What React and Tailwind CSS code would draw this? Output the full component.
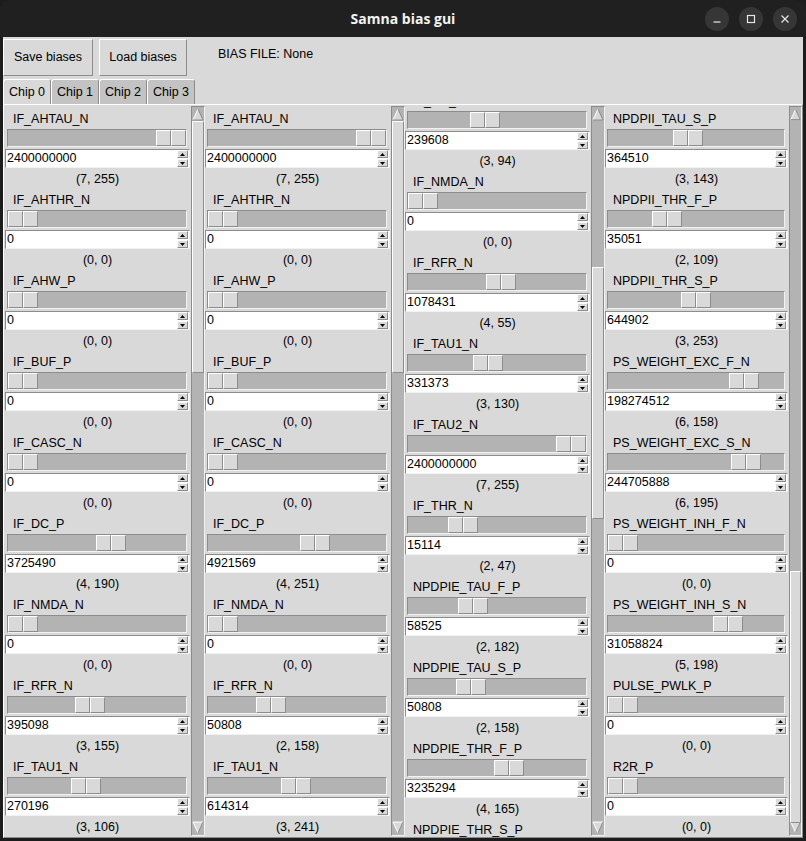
import React from 'react';

const columns = [
  {
    offset: 0,
    thumbTop: 0,
    items: [
      ['IF_AHTAU_N', '2400000000', 7, 255],
      ['IF_AHTHR_N', '0', 0, 0],
      ['IF_AHW_P', '0', 0, 0],
      ['IF_BUF_P', '0', 0, 0],
      ['IF_CASC_N', '0', 0, 0],
      ['IF_DC_P', '3725490', 4, 190],
      ['IF_NMDA_N', '0', 0, 0],
      ['IF_RFR_N', '395098', 3, 155],
      ['IF_TAU1_N', '270196', 3, 106],
    ],
  },
  {
    offset: 0,
    thumbTop: 0,
    items: [
      ['IF_AHTAU_N', '2400000000', 7, 255],
      ['IF_AHTHR_N', '0', 0, 0],
      ['IF_AHW_P', '0', 0, 0],
      ['IF_BUF_P', '0', 0, 0],
      ['IF_CASC_N', '0', 0, 0],
      ['IF_DC_P', '4921569', 4, 251],
      ['IF_NMDA_N', '0', 0, 0],
      ['IF_RFR_N', '50808', 2, 158],
      ['IF_TAU1_N', '614314', 3, 241],
    ],
  },
  {
    offset: -18,
    thumbTop: 146,
    tail: 'NPDPIE_THR_S_P',
    items: [
      ['IF_DC_P', '239608', 3, 94],
      ['IF_NMDA_N', '0', 0, 0],
      ['IF_RFR_N', '1078431', 4, 55],
      ['IF_TAU1_N', '331373', 3, 130],
      ['IF_TAU2_N', '2400000000', 7, 255],
      ['IF_THR_N', '15114', 2, 47],
      ['NPDPIE_TAU_F_P', '58525', 2, 182],
      ['NPDPIE_TAU_S_P', '50808', 2, 158],
      ['NPDPIE_THR_F_P', '3235294', 4, 165],
    ],
  },
  {
    offset: 0,
    thumbTop: 450,
    last: true,
    items: [
      ['NPDPII_TAU_S_P', '364510', 3, 143],
      ['NPDPII_THR_F_P', '35051', 2, 109],
      ['NPDPII_THR_S_P', '644902', 3, 253],
      ['PS_WEIGHT_EXC_F_N', '198274512', 6, 158],
      ['PS_WEIGHT_EXC_S_N', '244705888', 6, 195],
      ['PS_WEIGHT_INH_F_N', '0', 0, 0],
      ['PS_WEIGHT_INH_S_N', '31058824', 5, 198],
      ['PULSE_PWLK_P', '0', 0, 0],
      ['R2R_P', '0', 0, 0],
    ],
  },
];

const raised = 'border border-t-white border-l-white border-b-[#8c8c8c] border-r-[#8c8c8c]';
const sunken = 'border border-t-[#8c8c8c] border-l-[#8c8c8c] border-b-[#f2f2f2] border-r-[#f2f2f2]';

function Slider({ coarse, fine }) {
  const frac = (coarse * 256 + fine) / 2047;
  return (
    <div className={`relative ml-[2px] mr-[3px] h-[18px] bg-[#b3b3b3] ${sunken}`}>
      <div
        className="absolute top-0 flex h-[16px] w-[30px]"
        style={{ left: `calc(${frac} * (100% - 30px))` }}
      >
        <div className={`h-full w-[15px] bg-[#d9d9d9] ${raised}`} />
        <div className={`h-full w-[15px] bg-[#d9d9d9] ${raised}`} />
      </div>
    </div>
  );
}

function SpinBox({ value }) {
  return (
    <div className={`flex h-[19px] items-center bg-white ${sunken}`}>
      <span className="flex-1 pl-[1px] leading-none">{value}</span>
      <div className="mr-[1px] flex h-full w-[11px] flex-col gap-[1px]">
        <div className={`flex h-[8px] items-center justify-center bg-[#d9d9d9] ${raised}`}>
          <svg width="5" height="3" viewBox="0 0 5 3">
            <path d="M2.5 0L5 3H0z" fill="#000" />
          </svg>
        </div>
        <div className={`flex h-[8px] items-center justify-center bg-[#d9d9d9] ${raised}`}>
          <svg width="5" height="3" viewBox="0 0 5 3">
            <path d="M0 0H5L2.5 3z" fill="#000" />
          </svg>
        </div>
      </div>
    </div>
  );
}

function BiasItem({ name, value, coarse, fine }) {
  return (
    <div className="flex flex-col">
      <div className="flex h-[20px] items-center pl-[8px]">{name}</div>
      <Slider coarse={coarse} fine={fine} />
      <div className="mt-[2px]">
        <SpinBox value={value} />
      </div>
      <div className="flex h-[22px] items-center justify-center">
        ({coarse}, {fine})
      </div>
    </div>
  );
}

function Arrow({ down }) {
  return (
    <svg width="12" height="13" viewBox="0 0 12 13" className="block">
      {down ? (
        <>
          <polygon points="6,12 11,1 1,1" fill="#d9d9d9" />
          <line x1="1" y1="1" x2="11" y2="1" stroke="#ffffff" />
          <line x1="1" y1="1" x2="6" y2="12" stroke="#ffffff" />
          <line x1="11" y1="1" x2="6" y2="12" stroke="#8c8c8c" />
        </>
      ) : (
        <>
          <polygon points="6,1 11,12 1,12" fill="#d9d9d9" />
          <line x1="6" y1="1" x2="1" y2="12" stroke="#ffffff" />
          <line x1="6" y1="1" x2="11" y2="12" stroke="#8c8c8c" />
          <line x1="1" y1="12" x2="11" y2="12" stroke="#8c8c8c" />
        </>
      )}
    </svg>
  );
}

function Scrollbar({ thumbTop, narrow }) {
  return (
    <div
      className={`my-[1px] flex flex-col bg-[#b3b3b3] ${sunken} ${narrow ? 'w-[13px]' : 'w-[14px]'}`}
    >
      <div className="flex h-[14px] justify-center pt-[1px]">
        <Arrow />
      </div>
      <div className="relative flex-1">
        <div
          className={`absolute inset-x-0 h-[252px] bg-[#d9d9d9] ${raised}`}
          style={{ top: thumbTop }}
        />
      </div>
      <div className="flex h-[14px] items-end justify-center pb-[1px]">
        <Arrow down />
      </div>
    </div>
  );
}

function Column({ col }) {
  return (
    <div className={`flex h-full gap-[1px] ${col.last ? 'w-[197px]' : 'w-[200px]'}`}>
      <div className={`h-full overflow-hidden pt-[4px] ${col.last ? 'w-[183px]' : 'w-[185px]'}`}>
        <div style={{ marginTop: col.offset }}>
          {col.items.map(([name, value, coarse, fine], i) => (
            <BiasItem key={i} name={name} value={value} coarse={coarse} fine={fine} />
          ))}
          {col.tail && <div className="flex h-[20px] items-center pl-[8px]">{col.tail}</div>}
        </div>
      </div>
      <Scrollbar thumbTop={col.thumbTop} narrow={col.last} />
    </div>
  );
}

function WinButton({ children }) {
  return (
    <div className="flex h-[24px] w-[24px] items-center justify-center rounded-full bg-[#363636]">
      {children}
    </div>
  );
}

export default function App() {
  const tabs = ['Chip 0', 'Chip 1', 'Chip 2', 'Chip 3'];
  return (
    <div className="flex h-[841px] w-[806px] flex-col bg-[#1c1c1c] font-['Liberation_Sans',Arial,sans-serif] text-[12.5px] text-black">
      {/* Title bar */}
      <div className="grid h-[37px] grid-cols-[1fr_auto_1fr] items-center rounded-t-[10px] bg-[#202020]">
        <div />
        <div className="font-['Open_Sans',sans-serif] text-[14px] font-bold text-[#f2f2f2]">
          Samna bias gui
        </div>
        <div className="flex justify-end gap-[10px] pr-[9px]">
          <WinButton>
            <svg width="10" height="10" viewBox="0 0 10 10">
              <line x1="1.5" y1="8" x2="8.5" y2="8" stroke="#e6e6e6" strokeWidth="1.2" />
            </svg>
          </WinButton>
          <WinButton>
            <svg width="10" height="10" viewBox="0 0 10 10">
              <rect x="1.5" y="1.5" width="7" height="7" fill="none" stroke="#e6e6e6" strokeWidth="1.2" />
            </svg>
          </WinButton>
          <WinButton>
            <svg width="10" height="10" viewBox="0 0 10 10">
              <path d="M1.5 1.5L8.5 8.5M8.5 1.5L1.5 8.5" stroke="#e6e6e6" strokeWidth="1.2" />
            </svg>
          </WinButton>
        </div>
      </div>

      {/* Window body */}
      <div className="mx-[3px] flex h-[801px] flex-col bg-[#d9d9d9] pt-[2px]">
        <div className="flex h-[37px] items-start">
          <button className={`flex h-[37px] w-[90px] items-center justify-center bg-[#d9d9d9] ${raised}`}>
            Save biases
          </button>
          <button className={`ml-[6px] flex h-[37px] w-[88px] items-center justify-center bg-[#d9d9d9] ${raised}`}>
            Load biases
          </button>
          <div className="ml-[31px] pt-[6px]">BIAS FILE: None</div>
        </div>

        <div className="mt-[3px] flex h-[25px] items-end">
          {tabs.map((t, i) => (
            <div
              key={t}
              className={`flex h-[25px] w-[48px] items-center justify-center rounded-t-[3px] border border-b-0 border-t-white border-l-white border-r-[#8c8c8c] ${
                i === 0 ? 'bg-[#d9d9d9]' : 'bg-[#c3c3c3]'
              }`}
            >
              {t}
            </div>
          ))}
        </div>

        <div className="flex h-[734px] border border-t-white border-l-white border-b-[#8c8c8c] border-r-[#8c8c8c] pl-[1px]">
          {columns.map((col, i) => (
            <Column key={i} col={col} />
          ))}
        </div>
      </div>
    </div>
  );
}
